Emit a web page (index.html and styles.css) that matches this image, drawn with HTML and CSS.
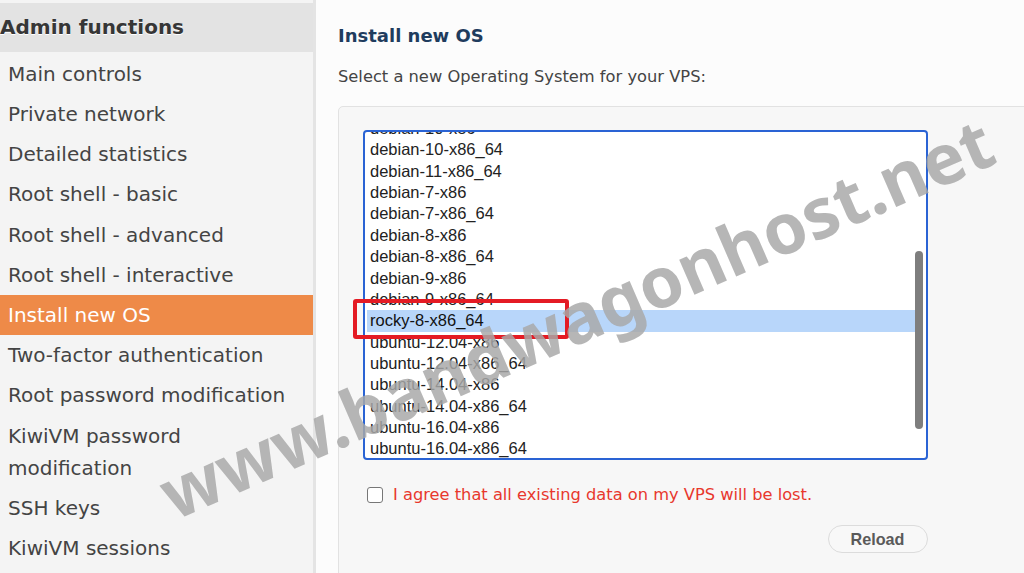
FILE: index.html
```html
<!DOCTYPE html>
<html lang="en">
<head>
<meta charset="utf-8">
<title>Install new OS</title>
<link rel="stylesheet" href="styles.css">
</head>
<body>
<div class="app">
  <aside class="sidebar">
    <div class="side-head">Admin functions</div>
    <ul class="menu">
      <li>Main controls</li>
      <li>Private network</li>
      <li>Detailed statistics</li>
      <li>Root shell - basic</li>
      <li>Root shell - advanced</li>
      <li>Root shell - interactive</li>
      <li class="active">Install new OS</li>
      <li>Two-factor authentication</li>
      <li>Root password modification</li>
      <li>KiwiVM password modification</li>
      <li>SSH keys</li>
      <li>KiwiVM sessions</li>
    </ul>
  </aside>
  <main class="content">
    <h1 class="title">Install new OS</h1>
    <p class="lead">Select a new Operating System for your VPS:</p>
    <section class="panel">
      <div class="listbox">
        <div class="viewport">
          <ul class="options">
            <li>debian-10-x86</li>
            <li>debian-10-x86_64</li>
            <li>debian-11-x86_64</li>
            <li>debian-7-x86</li>
            <li>debian-7-x86_64</li>
            <li>debian-8-x86</li>
            <li>debian-8-x86_64</li>
            <li>debian-9-x86</li>
            <li>debian-9-x86_64</li>
            <li class="selected">rocky-8-x86_64</li>
            <li>ubuntu-12.04-x86</li>
            <li>ubuntu-12.04-x86_64</li>
            <li>ubuntu-14.04-x86</li>
            <li>ubuntu-14.04-x86_64</li>
            <li>ubuntu-16.04-x86</li>
            <li>ubuntu-16.04-x86_64</li>
          </ul>
        </div>
        <div class="thumb"></div>
        <div class="mark"></div>
      </div>
      <label class="agree"><span class="box"></span><span class="agree-text">I agree that all existing data on my VPS will be lost.</span></label>
      <div class="actions"><button class="btn" type="button">Reload</button></div>
    </section>
  </main>
</div>
<svg class="watermark" width="1024" height="573" viewBox="0 0 1024 573" xmlns="http://www.w3.org/2000/svg">
  <text x="174" y="521" transform="rotate(-23.5 174 521)" class="wm-text">www.bandwagonhost.net</text>
</svg>
</body>
</html>
```

FILE: styles.css
```css
* { box-sizing: border-box; }

html, body {
  margin: 0;
  padding: 0;
  width: 1024px;
  height: 573px;
  overflow: hidden;
  background: #fcfcfc;
}

body {
  font-family: "DejaVu Sans", Verdana, sans-serif;
  color: #444;
}

.app {
  display: flex;
  height: 573px;
}

/* Sidebar */
.sidebar {
  width: 316px;
  flex: none;
  background: #f4f4f4;
  border-right: 3px solid #e4e4e4;
  padding-top: 3px;
}

.side-head {
  height: 49px;
  line-height: 49px;
  background: #e3e3e3;
  font-weight: bold;
  font-size: 20px;
  color: #363636;
  text-shadow: 0 1px 0 #ffffff;
  white-space: nowrap;
}

.menu {
  list-style: none;
  margin: 2px 0 0;
  padding: 0;
}

.menu li {
  font-size: 20px;
  line-height: 32.5px;
  padding: 3.85px 8px;
  color: #444;
}

.menu li.active {
  background: #ee8a48;
  color: #ffffff;
}

/* Content */
.content {
  flex: 1;
  padding: 24px 0 0 22px;
  min-width: 0;
}

.title {
  margin: 0;
  font-size: 18px;
  line-height: 24px;
  font-weight: bold;
  color: #1f3c5e;
}

.lead {
  margin: 17px 0 0;
  font-size: 16.3px;
  line-height: 24px;
  color: #444;
}

.panel {
  margin-top: 17px;
  width: 760px;
  height: 520px;
  background: #f7f7f7;
  border: 1px solid #e2e2e2;
  border-radius: 5px;
  padding: 23px 0 0 23.5px;
}

.listbox {
  position: relative;
  width: 565px;
  height: 330px;
  border: 2px solid #2a63d4;
  border-radius: 4px;
  background: #ffffff;
}

.viewport {
  height: 100%;
  overflow: hidden;
  border-radius: 2px;
}

.options {
  list-style: none;
  margin: -14px 0 0;
  padding: 0 3px 0 2px;
  font-family: "Liberation Sans", Arial, sans-serif;
  font-size: 16.5px;
  color: #222;
}

.options li {
  height: 21.36px;
  line-height: 21.36px;
  padding-left: 3.5px;
  white-space: nowrap;
}

.options li.selected {
  background: #b8d6fa;
  color: #111;
}

.thumb {
  position: absolute;
  left: 550.5px;
  top: 119px;
  width: 8px;
  height: 178px;
  border-radius: 4px;
  background: #7e7e7e;
}

.mark {
  position: absolute;
  left: -11.5px;
  top: 167px;
  width: 216px;
  height: 40px;
  border: 4.5px solid #e41b24;
  border-radius: 3px;
}

.agree {
  display: flex;
  align-items: center;
  gap: 10px;
  margin: 27px 0 0 4.5px;
  height: 16px;
}

.box {
  width: 16px;
  height: 16px;
  flex: none;
  border: 1.5px solid #777;
  border-radius: 3px;
  background: #ffffff;
}

.agree-text {
  font-size: 16.25px;
  line-height: 20px;
  color: #e8382d;
}

.actions {
  width: 565px;
  display: flex;
  justify-content: flex-end;
  margin-top: 22px;
}

.btn {
  width: 100px;
  height: 28px;
  border: 1px solid #dcdcdc;
  border-radius: 14px;
  background: #f8f8f8;
  font-family: "Liberation Sans", Arial, sans-serif;
  font-weight: bold;
  font-size: 16.2px;
  color: #5a5a5a;
  padding: 0;
}

/* Watermark overlay */
.watermark {
  position: fixed;
  left: 0;
  top: 0;
  pointer-events: none;
}

.wm-text {
  font-family: "Noto Sans", "DejaVu Sans", sans-serif;
  font-weight: bold;
  font-size: 70px;
  fill: rgba(168, 168, 168, 0.84);
}
```
